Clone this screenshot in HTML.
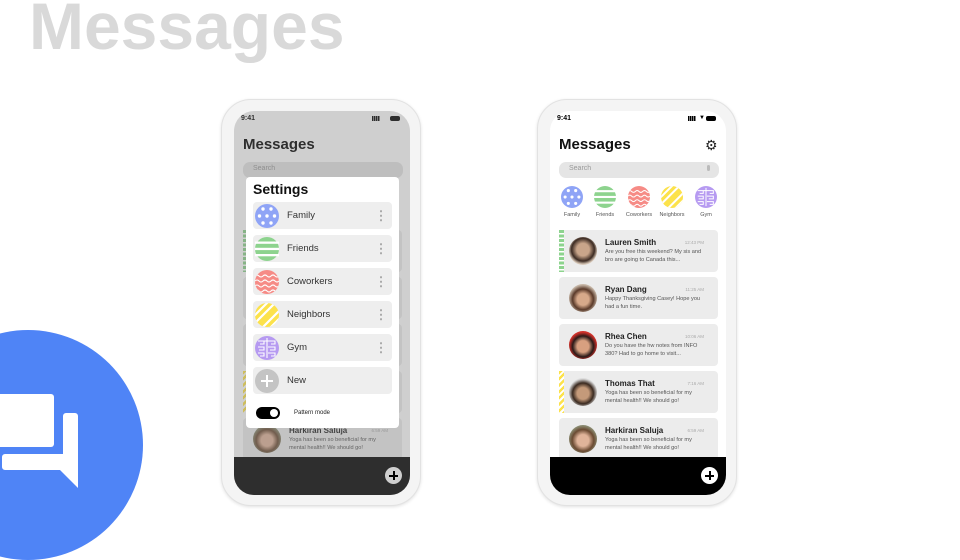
<!DOCTYPE html>
<html><head><meta charset="utf-8"><style>
*{margin:0;padding:0;box-sizing:border-box}
body{width:960px;height:540px;overflow:hidden;background:#fff;position:relative;font-family:"Liberation Sans",Arial,sans-serif}
.a{position:absolute}
.h1{left:29px;top:-12px;font-size:66px;font-weight:bold;color:#d9d9d9;letter-spacing:0px}
.phone{position:absolute;width:200px;height:407px;border-radius:30px;background:#f4f4f4;border:1px solid #e2e2e2;box-shadow:0 1px 3px rgba(0,0,0,.12)}
.screen{position:absolute;left:12px;top:11px;width:176px;height:384px;border-radius:20px;background:#fff;overflow:hidden}
.t{position:absolute;white-space:nowrap}
.card{position:absolute;left:9px;width:159px;height:42px;background:#ececec;border-radius:4px}
.av{position:absolute;left:10px;top:7px;width:28px;height:28px;border-radius:50%}
.nm{position:absolute;left:46px;top:8px;font-size:8px;font-weight:bold;color:#222}
.tm{position:absolute;right:14px;top:10px;font-size:4.5px;color:#aaa}
.ms{position:absolute;left:46px;top:19px;font-size:5.6px;line-height:7.5px;color:#555;width:104px}
.bar{position:absolute;left:0;top:346px;width:176px;height:38px;background:#000}
.plus{position:absolute;left:151px;top:356px;width:17px;height:17px;border-radius:50%;background:#fff}
.plus:before{content:"";position:absolute;left:4px;top:7.5px;width:9px;height:2px;background:#000}
.plus:after{content:"";position:absolute;left:7.5px;top:4px;width:2px;height:9px;background:#000}
.lbl{position:absolute;top:101px;font-size:5.5px;color:#555;width:40px;text-align:center}
.row{position:absolute;left:7px;width:139px;height:27px;background:#eee;border-radius:4px}
.row .ic{position:absolute;left:2px;top:2px;width:24px;height:24px}
.row .l{position:absolute;left:34px;top:8px;font-size:9.5px;color:#333}
.row .d{position:absolute;left:127px;top:7px;width:2px;height:13px;background:radial-gradient(circle,#aaa 1px,transparent 1.2px) 0 0/2px 4.5px}
</style></head><body>
<svg width="0" height="0" style="position:absolute">
<defs>
<symbol id="fam" viewBox="0 0 24 24"><circle cx="12" cy="12" r="12" fill="#8fa4f6"/><g fill="#fff"><circle cx="8" cy="5" r="1.7"/><circle cx="16" cy="5" r="1.7"/><circle cx="4.5" cy="12" r="1.7"/><circle cx="12" cy="12" r="1.7"/><circle cx="19.5" cy="12" r="1.7"/><circle cx="8" cy="19" r="1.7"/><circle cx="16" cy="19" r="1.7"/></g></symbol>
<symbol id="fri" viewBox="0 0 24 24"><circle cx="12" cy="12" r="12" fill="#8dd38e"/><g fill="#fff"><rect x="0" y="4.5" width="24" height="2.3"/><rect x="0" y="10.8" width="24" height="2.3"/><rect x="0" y="17" width="24" height="2.3"/></g></symbol>
<symbol id="cow" viewBox="0 0 24 24"><clipPath id="cc"><circle cx="12" cy="12" r="12"/></clipPath><circle cx="12" cy="12" r="12" fill="#f68b86"/><g clip-path="url(#cc)" fill="none" stroke="#fff" stroke-width="1.1"><path d="M0 6q2-2 4 0t4 0 4 0 4 0 4 0 4 0"/><path d="M0 11q2-2 4 0t4 0 4 0 4 0 4 0 4 0"/><path d="M0 16q2-2 4 0t4 0 4 0 4 0 4 0 4 0"/><path d="M0 21q2-2 4 0t4 0 4 0 4 0 4 0 4 0"/></g></symbol>
<symbol id="nei" viewBox="0 0 24 24"><clipPath id="cn"><circle cx="12" cy="12" r="12"/></clipPath><circle cx="12" cy="12" r="12" fill="#fce24b"/><g clip-path="url(#cn)" stroke="#fff" stroke-width="2.2"><path d="M-4 8L8-4M-4 16L16-4M-4 24L24-4M4 28L28 4M12 28L28 12M20 28L28 20"/></g></symbol>
<symbol id="gym" viewBox="0 0 24 24"><clipPath id="cg"><circle cx="12" cy="12" r="12"/></clipPath><circle cx="12" cy="12" r="12" fill="#b69af1"/><g clip-path="url(#cg)" fill="none" stroke="#fff" stroke-width="1.1"><path d="M3 5h6v3H5M15 5h-6M15 5h5v3h-4M3 11h6v3H4M13 11h7v3h-5M3 17h6v3H5M13 17h7v3h-4M12 2v20"/></g></symbol>
</defs></svg>

<div class="a h1">Messages</div>

<div class="a" style="left:-87px;top:330px;width:230px;height:230px;border-radius:50%;background:#4f84f6"></div>
<svg class="a" style="left:0;top:390px" width="90" height="110">
<rect x="-10" y="4" width="64" height="53" rx="3" fill="#fff"/>
<path d="M66 23h9a3 3 0 0 1 3 3v72l-18-18H5a3 3 0 0 1-3-3v-10a3 3 0 0 1 3-3h58v-38a3 3 0 0 1 3-3z" fill="#fff"/>
</svg>

<!-- RIGHT PHONE -->
<div class="phone" style="left:537px;top:99px">
<div class="screen">
<div class="t" style="left:7px;top:4px;font-size:7px;font-weight:bold">9:41</div>
<div class="t" style="left:138px;top:5px;width:8px;height:5px;background:linear-gradient(90deg,#000 1.5px,transparent 1.5px) 0 0/2px 100%"></div>
<div class="t" style="left:149px;top:4px;font-size:6px">&#9660;</div>
<div class="t" style="left:156px;top:5px;width:10px;height:5px;border-radius:2px;background:#000"></div>
<div class="t" style="left:9px;top:25px;font-size:15px;font-weight:bold;color:#111">Messages</div>
<div class="t" style="left:155px;top:27px;font-size:14px;color:#222;line-height:14px">&#9881;</div>
<div class="t" style="left:9px;top:51px;width:160px;height:16px;border-radius:7px;background:#e5e5e5"></div>
<div class="t" style="left:19px;top:54px;font-size:7px;color:#999">Search</div>
<div class="t" style="left:157px;top:54px;width:3px;height:6px;border-radius:2px;background:#bbb"></div>
<svg class="t" style="left:11px;top:75px" width="22" height="22"><use href="#fam"/></svg>
<svg class="t" style="left:44px;top:75px" width="22" height="22"><use href="#fri"/></svg>
<svg class="t" style="left:78px;top:75px" width="22" height="22"><use href="#cow"/></svg>
<svg class="t" style="left:111px;top:75px" width="22" height="22"><use href="#nei"/></svg>
<svg class="t" style="left:145px;top:75px" width="22" height="22"><use href="#gym"/></svg>
<div class="lbl" style="left:2px">Family</div>
<div class="lbl" style="left:35px">Friends</div>
<div class="lbl" style="left:69px">Coworkers</div>
<div class="lbl" style="left:102px">Neighbors</div>
<div class="lbl" style="left:136px">Gym</div>

<div class="card" style="top:119px"><div class="t" style="left:0;top:0;width:5px;height:42px;background:repeating-linear-gradient(180deg,#8dd38e 0 3px,#fff 3px 4.5px)"></div><div class="av" style="background:radial-gradient(circle at 50% 45%,#c9a58a 0 30%,#3b2a22 55%,#d8c8b8 70%)"></div><div class="nm">Lauren Smith</div><div class="tm">12:43 PM</div><div class="ms">Are you free this weekend? My sis and bro are going to Canada this...</div></div>
<div class="card" style="top:166px"><div class="av" style="background:radial-gradient(circle at 50% 55%,#d7a98a 0 28%,#5a3a2a 50%,#c7b7a7 70%)"></div><div class="nm">Ryan Dang</div><div class="tm">11:25 AM</div><div class="ms">Happy Thanksgiving Casey! Hope you had a fun time.</div></div>
<div class="card" style="top:213px"><div class="av" style="background:radial-gradient(circle at 50% 55%,#d8a080 0 28%,#2a1a18 50%,#d0312a 68%)"></div><div class="nm">Rhea Chen</div><div class="tm">10:06 AM</div><div class="ms">Do you have the hw notes from INFO 380? Had to go home to visit...</div></div>
<div class="card" style="top:260px"><div class="t" style="left:0;top:0;width:5px;height:42px;background:repeating-linear-gradient(135deg,#fce24b 0 2.5px,#fff 2.5px 4.5px)"></div><div class="av" style="background:radial-gradient(circle at 50% 55%,#c49a7a 0 28%,#3a2a20 50%,#dcdcdc 70%)"></div><div class="nm">Thomas That</div><div class="tm">7:16 AM</div><div class="ms">Yoga has been so beneficial for my mental health!! We should go!</div></div>
<div class="card" style="top:307px"><div class="av" style="background:radial-gradient(circle at 50% 55%,#e0b49a 0 28%,#6a4a32 52%,#8a8a70 70%)"></div><div class="nm">Harkiran Saluja</div><div class="tm">6:59 AM</div><div class="ms">Yoga has been so beneficial for my mental health!! We should go!</div></div>
<div class="bar"></div><div class="plus"></div>
</div></div>

<!-- LEFT PHONE -->
<div class="phone" style="left:221px;top:99px">
<div class="screen">
<div class="t" style="left:7px;top:4px;font-size:7px;font-weight:bold">9:41</div>
<div class="t" style="left:138px;top:5px;width:8px;height:5px;background:linear-gradient(90deg,#000 1.5px,transparent 1.5px) 0 0/2px 100%"></div>
<div class="t" style="left:156px;top:5px;width:10px;height:5px;border-radius:2px;background:#000"></div>
<div class="t" style="left:9px;top:25px;font-size:15px;font-weight:bold;color:#000">Messages</div>
<div class="t" style="left:9px;top:51px;width:160px;height:16px;border-radius:7px;background:#e5e5e5"></div>
<div class="t" style="left:19px;top:54px;font-size:7px;color:#999">Search</div>
<div class="card" style="top:119px"><div class="t" style="left:0;top:0;width:5px;height:42px;background:repeating-linear-gradient(180deg,#8dd38e 0 3px,#fff 3px 4.5px)"></div></div>
<div class="card" style="top:166px"></div>
<div class="card" style="top:213px"></div>
<div class="card" style="top:260px"><div class="t" style="left:0;top:0;width:5px;height:42px;background:repeating-linear-gradient(135deg,#fce24b 0 2.5px,#fff 2.5px 4.5px)"></div></div>
<div class="card" style="top:307px"><div class="av" style="background:radial-gradient(circle at 50% 55%,#e0b49a 0 28%,#6a4a32 52%,#8a8a70 70%)"></div><div class="nm">Harkiran Saluja</div><div class="tm">6:59 AM</div><div class="ms">Yoga has been so beneficial for my mental health!! We should go!</div></div>
<div class="bar"></div>
<div class="t" style="left:0;top:0;width:176px;height:384px;background:rgba(124,124,124,.37)"></div>
<div class="plus" style="background:#cfcfcf"></div>
<div class="t" style="left:12px;top:66px;width:153px;height:251px;background:#fff;border-radius:4px">
<div class="t" style="left:7px;top:4px;font-size:14px;font-weight:bold;color:#111">Settings</div>
<div class="row" style="top:25px"><svg class="ic"><use href="#fam"/></svg><div class="l">Family</div><div class="d"></div></div>
<div class="row" style="top:58px"><svg class="ic"><use href="#fri"/></svg><div class="l">Friends</div><div class="d"></div></div>
<div class="row" style="top:91px"><svg class="ic"><use href="#cow"/></svg><div class="l">Coworkers</div><div class="d"></div></div>
<div class="row" style="top:124px"><svg class="ic"><use href="#nei"/></svg><div class="l">Neighbors</div><div class="d"></div></div>
<div class="row" style="top:157px"><svg class="ic"><use href="#gym"/></svg><div class="l">Gym</div><div class="d"></div></div>
<div class="row" style="top:190px"><div class="t" style="left:2px;top:2px;width:24px;height:24px;border-radius:50%;background:#c4c4c4"></div><div class="t" style="left:8px;top:13px;width:12px;height:2px;background:#fff"></div><div class="t" style="left:13px;top:8px;width:2px;height:12px;background:#fff"></div><div class="l">New</div></div>
<div class="t" style="left:10px;top:230px;width:24px;height:12px;border-radius:6px;background:#000"></div>
<div class="t" style="left:24px;top:232px;width:8px;height:8px;border-radius:50%;background:#fff"></div>
<div class="t" style="left:48px;top:233px;font-size:6px;color:#222">Pattern mode</div>
</div>
</div></div>
</body></html>
